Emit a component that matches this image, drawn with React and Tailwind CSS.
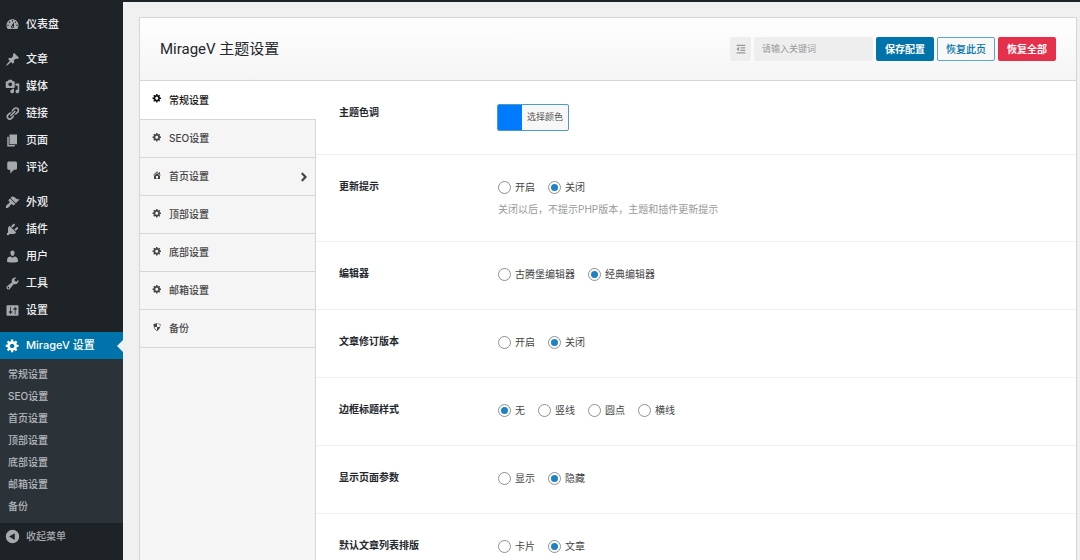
import { useState } from "react";
import { FaAngleRight, FaOutdent } from "react-icons/fa";

const ICONS = {
  dashboard:
    "M3.76 16h12.48c1.1-1.37 1.76-3.11 1.76-5 0-4.42-3.58-8-8-8s-8 3.58-8 8c0 1.89.66 3.63 1.76 5zM10 4c.55 0 1 .45 1 1s-.45 1-1 1-1-.45-1-1 .45-1 1-1zM6 6c.55 0 1 .45 1 1s-.45 1-1 1-1-.45-1-1 .45-1 1-1zm8 0c.55 0 1 .45 1 1s-.45 1-1 1-1-.45-1-1 .45-1 1-1zm-5.37 5.55L12 7v6c0 1.1-.9 2-2 2s-2-.9-2-2c0-.57.24-1.08.63-1.45zM4 10c.55 0 1 .45 1 1s-.45 1-1 1-1-.45-1-1 .45-1 1-1zm12 0c.55 0 1 .45 1 1s-.45 1-1 1-1-.45-1-1 .45-1 1-1zm-5 3c0-.55-.45-1-1-1s-1 .45-1 1 .45 1 1 1 1-.45 1-1z",
  post: "M10.44 3.02l1.82-1.82 6.36 6.35-1.83 1.82c-1.05-.68-2.48-.57-3.41.36l-.75.75c-.92.93-1.04 2.35-.35 3.41l-1.83 1.82-2.41-2.41-2.8 2.79c-.42.42-3.38 2.71-3.8 2.29s1.86-3.39 2.28-3.81l2.79-2.79L4.1 9.36l1.83-1.82c1.05.69 2.48.57 3.4-.36l.75-.75c.93-.92 1.05-2.35.36-3.41z",
  media:
    "M13 11V4c0-.55-.45-1-1-1h-1.67L9 1H5L3.67 3H2c-.55 0-1 .45-1 1v7c0 .55.45 1 1 1h10c.55 0 1-.45 1-1zM7 4.5c1.38 0 2.5 1.12 2.5 2.5S8.38 9.5 7 9.5 4.5 8.38 4.5 7 5.62 4.5 7 4.5zM14 6h5v10.5c0 1.38-1.12 2.5-2.5 2.5S14 17.88 14 16.5s1.12-2.5 2.5-2.5c.17 0 .34.02.5.05V9h-3V6zm-4 8.05V13h2v3.5c0 1.38-1.12 2.5-2.5 2.5S7 17.88 7 16.5 8.12 14 9.5 14c.17 0 .34.02.5.05z",
  links:
    "M17.74 2.76c1.68 1.69 1.68 4.41 0 6.1l-1.53 1.52c-1.12 1.12-2.7 1.47-4.14 1.09l2.62-2.61.76-.77.76-.76c.84-.84.84-2.2 0-3.04-.84-.85-2.2-.85-3.04 0l-.77.76-3.38 3.38c-.37-1.44-.02-3.02 1.1-4.14l1.52-1.53c1.69-1.68 4.42-1.68 6.1 0zM8.59 13.43l5.34-5.34c.42-.42.42-1.1 0-1.52-.44-.43-1.13-.39-1.53 0l-5.33 5.34c-.42.42-.42 1.1 0 1.52.44.43 1.13.39 1.52 0zm-.76 2.29l4.14-4.15c.38 1.44.03 3.02-1.09 4.14l-1.52 1.53c-1.69 1.68-4.41 1.68-6.1 0-1.68-1.68-1.68-4.42 0-6.1l1.53-1.52c1.12-1.12 2.7-1.47 4.14-1.1l-4.14 4.15c-.85.84-.85 2.2 0 3.05.84.84 2.2.84 3.04 0z",
  page: "M6 15V2h10v13H6zm-1 1h8v2H3V5h2v11z",
  comments: "M5 2h9c1.1 0 2 .9 2 2v7c0 1.1-.9 2-2 2h-2l-5 5v-5H5c-1.1 0-2-.9-2-2V4c0-1.1.9-2 2-2z",
  appearance:
    "M14.48 11.06L7.41 3.99l1.5-1.5c.5-.56 2.3-.47 3.51.32 1.21.8 1.43 1.28 2.91 2.1 1.18.64 2.45 1.26 4.45.85zm-.71.71L6.7 4.7 4.93 6.47c-.39.39-.39 1.02 0 1.41l1.06 1.06c.39.39.39 1.03 0 1.42-.6.6-1.43 1.11-2.21 1.69-.35.26-.7.53-1.01.84C1.43 14.23.4 16.08 1.4 17.07c.99 1 2.84-.03 4.18-1.36.31-.31.58-.66.85-1.02.57-.78 1.08-1.61 1.69-2.21.39-.39 1.02-.39 1.41 0l1.06 1.06c.39.39 1.02.39 1.41 0z",
  plugins:
    "M13.11 4.36L9.87 7.6 8 5.73l3.24-3.24c.35-.34 1.05-.2 1.56.32.52.51.66 1.21.31 1.55zm-8 1.77l.91-1.12 9.01 9.01-1.19.84c-.71.71-2.63 1.16-3.82 1.16H6.14L4.9 17.26c-.59.59-1.54.59-2.12 0-.59-.58-.59-1.53 0-2.12l1.24-1.24v-3.88c0-1.13.4-3.19 1.09-3.89zm7.26 3.97l3.24-3.24c.34-.35 1.04-.21 1.55.31.52.51.66 1.21.31 1.55l-3.24 3.25z",
  users:
    "M10 9.25c-2.27 0-2.73-3.44-2.73-3.44C7 4.02 7.82 2 9.97 2c2.16 0 2.98 2.02 2.71 3.81 0 0-.41 3.44-2.68 3.44zm0 2.57L12.72 10c2.39 0 4.52 2.33 4.52 4.53v2.49s-3.65 1.13-7.24 1.13c-3.65 0-7.24-1.13-7.24-1.13v-2.49c0-2.25 1.94-4.48 4.47-4.48z",
  tools:
    "M16.68 9.77c-1.34 1.34-3.3 1.67-4.95.99l-5.41 6.52c-.99.99-2.59.99-3.58 0s-.99-2.59 0-3.57l6.52-5.42c-.68-1.65-.35-3.61.99-4.95 1.28-1.28 3.12-1.62 4.72-1.06l-2.89 2.89 2.82 2.82 2.86-2.87c.53 1.58.18 3.39-1.08 4.65zM3.81 16.21c.4.39 1.04.39 1.43 0 .4-.4.4-1.04 0-1.43-.39-.4-1.03-.4-1.43 0-.39.39-.39 1.03 0 1.43z",
  settings:
    "M18 16V4c0-.55-.45-1-1-1H3c-.55 0-1 .45-1 1v12c0 .55.45 1 1 1h14c.55 0 1-.45 1-1zM8 11h1c.55 0 1 .45 1 1s-.45 1-1 1H8v1.5c0 .28-.22.5-.5.5s-.5-.22-.5-.5V13H6c-.55 0-1-.45-1-1s.45-1 1-1h1V5.5c0-.28.22-.5.5-.5s.5.22.5.5V11zm5-2h-1c-.55 0-1-.45-1-1s.45-1 1-1h1V5.5c0-.28.22-.5.5-.5s.5.22.5.5V7h1c.55 0 1 .45 1 1s-.45 1-1 1h-1v5.5c0 .28-.22.5-.5.5s-.5-.22-.5-.5V9z",
  generic:
    "M18 12h-2.18c-.17.7-.44 1.35-.81 1.93l1.54 1.54-2.1 2.1-1.54-1.54c-.58.36-1.23.63-1.91.79V19H8v-2.18c-.68-.16-1.33-.43-1.91-.79l-1.54 1.54-2.12-2.12 1.54-1.54c-.36-.58-.63-1.23-.79-1.91H1V9.03h2.17c.16-.7.44-1.35.8-1.94L2.43 5.55l2.1-2.1 1.54 1.54c.58-.37 1.24-.64 1.93-.81V2h3v2.18c.68.16 1.33.43 1.91.79l1.54-1.54 2.12 2.12-1.54 1.54c.36.59.64 1.24.8 1.94H18V12zm-8.5 1.5c1.66 0 3-1.34 3-3s-1.34-3-3-3-3 1.34-3 3 1.34 3 3 3z",
  home: "M16 8.5l1.53 1.53-1.06 1.06L10 4.6l-6.47 6.49-1.06-1.06L10 2.5l4 4v-2h2v4zm-6-2.46l6 5.99V18H4v-5.97zM12 17v-5H8v5h4z",
  shield: "M10 2s3 2 7 2c0 11-7 14-7 14S3 15 3 4c4 0 7-2 7-2zm0 8h5s1-1 1-5c0 0-5-1-6-2v7H5c1 4 5 7 5 7v-7z",
  collapse: "M10 1a9 9 0 1 0 0 18a9 9 0 1 0 0-18zM13 5.5v9L5.5 10z",
};

const menuGroups = [
  [{ icon: "dashboard", label: "仪表盘" }],
  [
    { icon: "post", label: "文章" },
    { icon: "media", label: "媒体" },
    { icon: "links", label: "链接" },
    { icon: "page", label: "页面" },
    { icon: "comments", label: "评论" },
  ],
  [
    { icon: "appearance", label: "外观" },
    { icon: "plugins", label: "插件" },
    { icon: "users", label: "用户" },
    { icon: "tools", label: "工具" },
    { icon: "settings", label: "设置" },
  ],
];

const sections = [
  { label: "常规设置", icon: "generic" },
  { label: "SEO设置", icon: "generic" },
  { label: "首页设置", icon: "home", more: true },
  { label: "顶部设置", icon: "generic" },
  { label: "底部设置", icon: "generic" },
  { label: "邮箱设置", icon: "generic" },
  { label: "备份", icon: "shield" },
];

const fields = [
  {
    id: "update",
    label: "更新提示",
    options: ["开启", "关闭"],
    value: "关闭",
    desc: "关闭以后，不提示PHP版本，主题和插件更新提示",
  },
  { id: "editor", label: "编辑器", options: ["古腾堡编辑器", "经典编辑器"], value: "经典编辑器" },
  { id: "revision", label: "文章修订版本", options: ["开启", "关闭"], value: "关闭" },
  { id: "border", label: "边框标题样式", options: ["无", "竖线", "圆点", "横线"], value: "无" },
  { id: "params", label: "显示页面参数", options: ["显示", "隐藏"], value: "隐藏" },
  { id: "layout", label: "默认文章列表排版", options: ["卡片", "文章"], value: "文章" },
];

const DashIcon = ({ name, className = "size-[15px]" }) => (
  <svg viewBox="0 0 20 20" className={className} fill="currentColor" fillRule="evenodd" aria-hidden="true">
    <path d={ICONS[name]} />
  </svg>
);

const Sidebar = () => (
  <nav className="w-[123px] shrink-0 bg-[#1d2327] pt-[9px] text-[11px] font-medium text-[#f0f0f1]">
    {menuGroups.map((group, i) => (
      <ul key={i} className="mb-2">
        {group.map((item) => (
          <li key={item.label}>
            <a href="#" className="flex h-[27px] items-center gap-1.5 pl-[5px]">
              <span className="text-[#a7aaad]">
                <DashIcon name={item.icon} />
              </span>
              {item.label}
            </a>
          </li>
        ))}
      </ul>
    ))}
    <a href="#" className="relative flex h-[27px] items-center gap-1.5 bg-[#0073aa] pl-[5px] text-white">
      <DashIcon name="generic" />
      MirageV 设置
      <span className="absolute top-1/2 right-0 -translate-y-1/2 border-y-[6px] border-r-[6px] border-y-transparent border-r-[#f0f0f1]" />
    </a>
    <ul className="bg-[#2c3338] pt-1 pb-1.5 text-[10px] text-[#b4b9be]">
      {sections.map((s) => (
        <li key={s.label}>
          <a href="#" className="block pl-2 leading-[22px]">
            {s.label}
          </a>
        </li>
      ))}
    </ul>
    <button type="button" className="flex h-[27px] items-center gap-1.5 pl-[5px] text-[10px] text-[#a7aaad]">
      <DashIcon name="collapse" />
      收起菜单
    </button>
  </nav>
);

const RadioField = ({ field }) => {
  const [value, setValue] = useState(field.value);

  return (
    <fieldset className="flex border-b border-[#f0f0f0] pt-5 pr-5 pb-[22px] pl-[23px]">
      <legend className="float-left w-[159px] shrink-0 text-[10px] leading-[22px] font-bold text-[#23282d]">
        {field.label}
      </legend>
      <div className="text-[10px]">
        <div className="flex h-[25px] items-center gap-[13px]">
          {field.options.map((o) => (
            <label key={o} className="flex items-center gap-1 text-[#444444]">
              <input
                type="radio"
                name={field.id}
                value={o}
                checked={value === o}
                onChange={() => setValue(o)}
                className="flex size-[13px] appearance-none items-center justify-center rounded-full border border-[#8c8f94] bg-white checked:before:size-[7px] checked:before:rounded-full checked:before:bg-[#1e82c4]"
              />
              {o}
            </label>
          ))}
        </div>
        {field.desc && <p className="leading-[19px] text-[#999999]">{field.desc}</p>}
      </div>
    </fieldset>
  );
};

const App = () => {
  const [keyword, setKeyword] = useState("");

  return (
    <div className="flex h-screen flex-col overflow-hidden border-t-2 border-[#1d2327] bg-[#f0f0f1] font-[Inter,'Noto_Sans_CJK_SC',sans-serif]">
      <div className="flex min-h-0 flex-1">
        <Sidebar />
        <main className="flex min-w-0 flex-1 flex-col overflow-y-auto pt-[15px] pr-[3px] pl-4 [scrollbar-width:none]">
          <div className="flex shrink-0 grow flex-col border border-b-0 border-[#d5d6da] bg-white">
            <header className="flex h-[63px] items-center justify-between border-b border-[#d5d6da] bg-linear-to-b from-[#fefefe] to-[#f5f5f5] px-5">
              <h1 className="font-[Roboto,'Noto_Sans_CJK_SC',sans-serif] text-[15px] text-[#23282d]">
                MirageV 主题设置
              </h1>
              <div className="flex h-6 gap-[3px] text-[10px] font-bold">
                <button
                  type="button"
                  aria-label="展开全部"
                  className="flex w-[21px] items-center justify-center rounded-xs bg-[#eeeeee] text-[#999999]"
                >
                  <FaOutdent />
                </button>
                <input
                  type="text"
                  aria-label="搜索"
                  placeholder="请输入关键词"
                  value={keyword}
                  onChange={(e) => setKeyword(e.target.value)}
                  className="w-[119px] rounded-xs bg-[#eeeeee] px-2 text-[9px] font-normal placeholder:text-[#999999]"
                />
                <button type="button" className="w-[58px] rounded-xs bg-[#0073aa] text-white">
                  保存配置
                </button>
                <button
                  type="button"
                  className="w-[58px] rounded-xs border border-[#5fa5c6] bg-[#f8f8f8] font-medium text-[#0073aa]"
                >
                  恢复此页
                </button>
                <button type="button" className="w-[58px] rounded-xs bg-[#e5304b] text-white">
                  恢复全部
                </button>
              </div>
            </header>
            <div className="flex flex-1">
              <nav className="flex w-[176px] shrink-0 flex-col">
                <ul className="text-[10px] font-medium text-[#444444]">
                  {sections.map((s, i) => (
                    <li key={s.label}>
                      <a
                        href="#"
                        className={
                          i === 0
                            ? "flex h-[39px] items-center gap-[7px] border-b border-[#d5d6da] bg-white pl-3 text-[#111111]"
                            : "flex h-[38px] items-center gap-[7px] border-r border-b border-[#d5d6da] bg-[#f5f5f5] pr-1 pl-3"
                        }
                      >
                        <DashIcon name={s.icon} className="mb-1 size-2.5" />
                        {s.label}
                        {s.more && <FaAngleRight className="ml-auto size-3.5" />}
                      </a>
                    </li>
                  ))}
                </ul>
                <div className="flex-1 border-r border-[#d5d6da] bg-[#f5f5f5]" />
              </nav>
              <div className="min-w-0 flex-1">
                <div className="flex border-b border-[#f0f0f0] pt-5 pr-5 pb-[22px] pl-[23px]">
                  <span
                    id="theme-color"
                    className="w-[158px] shrink-0 text-[10px] leading-[22px] font-bold text-[#23282d]"
                  >
                    主题色调
                  </span>
                  <button
                    type="button"
                    aria-describedby="theme-color"
                    className="mt-[3px] mb-px flex h-[27px] overflow-hidden rounded-xs border border-[#4d9bc0] bg-[#f7f7f7] text-[9px] text-[#555555]"
                  >
                    <span className="h-full w-6 bg-[#007bff]" />
                    <span className="px-[5px] leading-6">选择颜色</span>
                  </button>
                </div>
                {fields.map((f) => (
                  <RadioField key={f.id} field={f} />
                ))}
              </div>
            </div>
          </div>
        </main>
      </div>
    </div>
  );
};

export default App;
